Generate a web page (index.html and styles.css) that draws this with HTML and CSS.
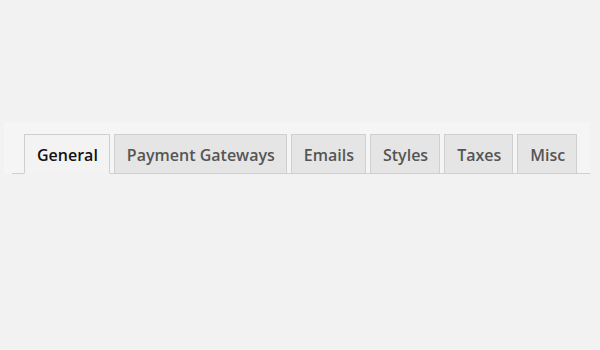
FILE: index.html
```html
<!DOCTYPE html>
<html>
<head>
<meta charset="utf-8">
<link rel="stylesheet" href="styles.css">
</head>
<body>
<div class="panel">
  <nav class="tabs">
    <a class="tab active">General</a>
    <a class="tab">Payment Gateways</a>
    <a class="tab">Emails</a>
    <a class="tab">Styles</a>
    <a class="tab">Taxes</a>
    <a class="tab">Misc</a>
  </nav>
</div>
</body>
</html>
```
FILE: styles.css
```css
html, body {
  margin: 0;
  padding: 0;
  background: #f2f2f2;
  width: 600px;
  height: 350px;
  overflow: hidden;
}
.panel {
  margin: 122px 10px 0 4px;
  padding: 12px 0 0 8px;
  background: #f5f5f5;
}
.tabs {
  display: flex;
  gap: 4px;
  padding-left: 12px;
  border-bottom: 1px solid #cfcfcf;
  font-family: "Open Sans", "Noto Sans", sans-serif;
  font-weight: 600;
  font-size: 16px;
}
.tab {
  display: block;
  box-sizing: border-box;
  height: 39px;
  line-height: 40px;
  padding: 0 11px 0 12px;
  margin-bottom: -1px;
  border: 1px solid #cfcfcf;
  border-bottom: none;
  background: #e5e5e5;
  color: #555;
  white-space: nowrap;
}
.tab.active {
  background: #f3f3f3;
  color: #111;
  height: 40px;
  border-bottom: 1px solid #f3f3f3;
}
```
